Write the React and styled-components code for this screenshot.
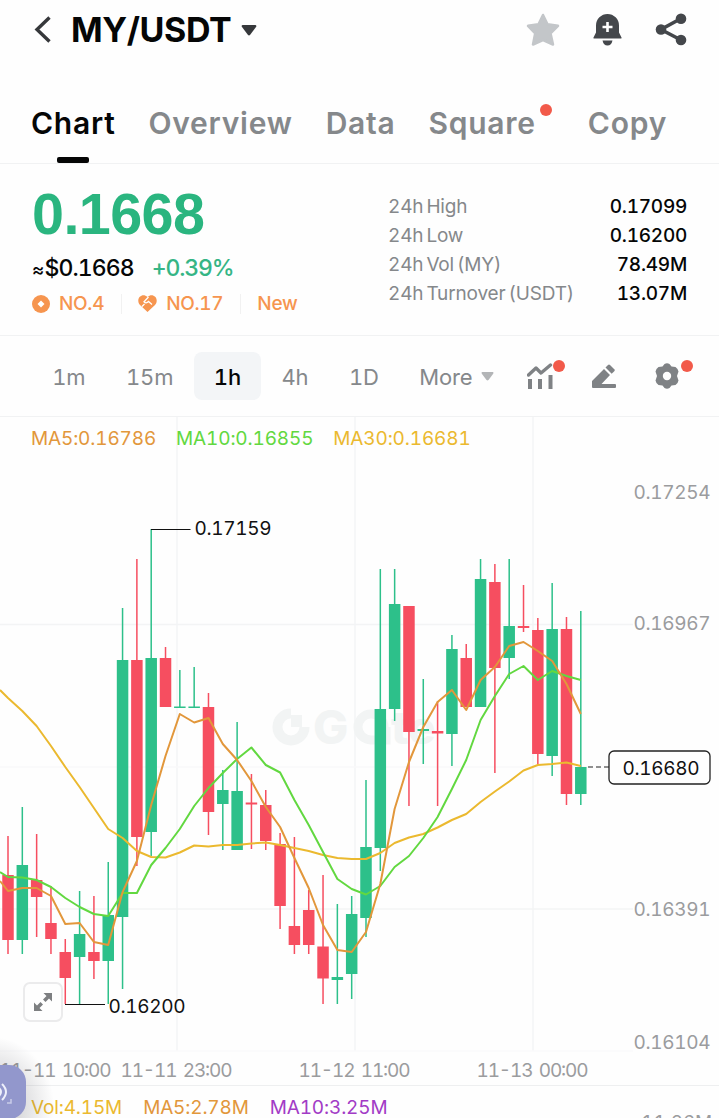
import React, { useState } from "react";
import styled, { createGlobalStyle } from "styled-components";

const GlobalStyle = createGlobalStyle`
    * {
        box-sizing: border-box;
    }
    body {
        margin: 0;
        background: #fefefe;
        overflow: hidden;
    }
`;

const UP = "#2dc08a";
const DOWN = "#f64e60";
const MA5 = "#e2973b";
const MA10 = "#62d840";
const MA30 = "#ebb92f";

const Page = styled.div`
    width: 719px;
    height: 1118px;
    overflow: hidden;
    position: relative;
    background: #fefefe;
    color: #050606;
    font-family: Inter, "Liberation Sans", sans-serif;
    font-feature-settings: "tnum";
    white-space: nowrap;
`;

const Header = styled.header`
    height: 60px;
    display: flex;
    align-items: center;
    justify-content: space-between;
    padding: 0 32px 0 34px;
`;

const Pair = styled.div`
    display: flex;
    align-items: center;
`;

const PairName = styled.h1`
    margin: 0 10px 0 19px;
    font-size: 34px;
    line-height: 60px;
    font-weight: 700;
    letter-spacing: -0.4px;
`;

const Actions = styled.div`
    display: flex;
    align-items: center;
    gap: 32.5px;
    height: 58px;
`;

const Tabs = styled.nav`
    height: 104px;
    display: flex;
    align-items: flex-start;
    gap: 33px;
    padding: 43px 32px 0 31px;
    border-bottom: 1px solid #f1f2f3;
`;

const Tab = styled.div`
    display: flex;
    flex-direction: column;
    align-items: center;
    position: relative;
    margin-right: ${(p) => (p.$dot ? 19 : 0)}px;
    font-size: 30px;
    line-height: 40px;
    font-weight: 600;
    letter-spacing: 0.75px;
    color: ${(p) => (p.$active ? "#050606" : "#85888b")};
`;

const TabBar = styled.span`
    width: 32px;
    height: 6px;
    margin-top: 14px;
    border-radius: 2px;
    background: #050606;
`;

const Dot = styled.span`
    position: absolute;
    width: 12px;
    height: 12px;
    border-radius: 50%;
    background: #f25a4a;
    top: ${(p) => p.$top}px;
    right: ${(p) => p.$right}px;
`;

const Quote = styled.section`
    height: 172px;
    display: flex;
    justify-content: space-between;
    padding: 20px 32px 0 32px;
    border-bottom: 1px solid #f1f2f3;
`;

const Price = styled.div`
    font-family: "Liberation Sans", sans-serif;
    font-size: 57.5px;
    line-height: 61px;
    font-weight: 700;
    letter-spacing: -0.6px;
    color: #2ab57f;
`;

const SubPrice = styled.div`
    display: flex;
    gap: 18px;
    height: 46px;
    font-size: 23px;
    line-height: 46px;
    font-weight: 500;
    letter-spacing: -0.9px;
`;

const Approx = styled.span`
    font-size: 19px;
    line-height: 1;
    margin-right: 1px;
`;

const Change = styled.span`
    color: #35b585;
    letter-spacing: -1.15px;
`;

const Tags = styled.div`
    display: flex;
    align-items: center;
    height: 25px;
    font-size: 19px;
    font-weight: 500;
    letter-spacing: -0.3px;
    color: #f6954f;
`;

const Tag = styled.span`
    display: flex;
    align-items: center;
    gap: 9px;
    line-height: 20px;

    & + & {
        margin-left: 17px;
        padding-left: 16px;
        border-left: 1px solid #f1f1f1;
    }
`;

const Stats = styled.dl`
    width: 299px;
    margin: 8px 0 0;
`;

const Stat = styled.div`
    display: flex;
    justify-content: space-between;
    font-size: 19px;
    line-height: 29px;
`;

const StatName = styled.dt`
    color: #85888b;
    letter-spacing: -0.15px;
    word-spacing: -2px;
`;

const StatValue = styled.dd`
    margin: 0;
    font-weight: 500;
    letter-spacing: -0.25px;
`;

const Toolbar = styled.div`
    height: 81px;
    display: flex;
    align-items: center;
    padding: 0 32px 0 32px;
    border-bottom: 1px solid #f1f2f3;
`;

const Frame = styled.div`
    height: 48px;
    display: flex;
    align-items: center;
    gap: 9px;
    padding: 1px 20.3px 0;
    border-radius: 8px;
    font-size: 22px;
    font-weight: ${(p) => (p.$active ? 500 : 400)};
    letter-spacing: -0.2px;
    color: ${(p) => (p.$active ? "#050606" : "#85888b")};
    background: ${(p) => (p.$active ? "#f3f5f7" : "transparent")};
`;

const Tools = styled.div`
    display: flex;
    gap: 37.5px;
    margin-left: auto;
    margin-right: 7px;
`;

const Tool = styled.span`
    display: flex;
    position: relative;
`;

const ChartArea = styled.section`
    position: relative;
    height: 669px;
    border-bottom: 1px solid #eeeff0;

    svg {
        display: block;
    }
`;

const Legend = styled.div`
    display: flex;
    gap: 20px;
    padding-left: 31px;
    font-size: 19px;
    line-height: 24px;
    letter-spacing: -0.15px;
`;

const TopLegend = styled(Legend)`
    position: absolute;
    top: 10px;
    left: 0;
`;

const VolLegend = styled(Legend)`
    gap: 21px;
    padding-top: 10px;
    height: 32px;
    overflow: hidden;
`;

const LegendItem = styled.span`
    color: ${(p) => p.$color};
`;

const VolAxis = styled.span`
    margin-left: auto;
    margin-right: 7px;
    padding-top: 15px;
    color: #9b9c9e;
`;

const Expand = styled.button`
    position: absolute;
    left: 23px;
    top: 565px;
    width: 40px;
    height: 40px;
    display: grid;
    place-items: center;
    padding: 0;
    border: 2px solid #ebebec;
    border-radius: 7px;
    background: #fefefe;
`;

const Halo = styled.div`
    position: absolute;
    left: -70px;
    bottom: -55px;
    width: 124px;
    height: 136px;
    border-radius: 50%;
    background: radial-gradient(closest-side, rgba(60, 60, 70, 0.2) 40%, rgba(60, 60, 70, 0) 100%);
`;

const Assist = styled.div`
    position: absolute;
    left: -28px;
    bottom: -1px;
    width: 54px;
    height: 54px;
    display: flex;
    align-items: center;
    justify-content: flex-end;
    padding-right: 10px;
    border-radius: 17px;
    background: #9297cc;
`;

const X0 = 8;
const STEP = 14.32;
const TOP = 417;

// wick top, body top, body bottom, wick bottom
const candles = [
    ["d", 836, 875, 940, 954],
    ["u", 807, 865, 940, 954],
    ["d", 834, 880, 897, 937],
    ["d", 886, 923, 939, 954],
    ["d", 939, 952, 978, 1004],
    ["u", 891, 934, 957, 1004],
    ["d", 896, 952, 961, 979],
    ["u", 862, 915, 961, 1004],
    ["u", 608, 660, 917, 989],
    ["d", 559, 660, 837, 866],
    ["u", 529, 658, 832, 856],
    ["d", 647, 658, 707, 707],
    ["u", 670, 706.5, 708, 708],
    ["u", 667, 706.5, 708, 708],
    ["d", 693, 707, 812, 835],
    ["u", 770, 790, 804, 850],
    ["u", 722, 791, 850, 850],
    ["d", 774, 802.5, 804.5, 849],
    ["d", 790, 805, 841, 850],
    ["d", 833, 844, 906, 929],
    ["d", 837, 926, 945, 954],
    ["d", 890, 910, 945, 954],
    ["d", 875, 946.5, 978.5, 1004],
    ["u", 904, 977, 980, 1004],
    ["u", 896, 914, 974, 999],
    ["u", 780, 847, 918, 937],
    ["u", 569, 709, 848, 871],
    ["u", 569, 604, 709, 721],
    ["d", 606, 606, 732, 806],
    ["u", 679, 729, 731, 764],
    ["d", 701, 731, 733.5, 806],
    ["u", 635, 649, 734, 766],
    ["d", 644, 658, 707, 707],
    ["u", 559, 579, 707, 707],
    ["d", 564, 582, 668, 773],
    ["u", 559, 626, 658, 679],
    ["d", 585, 626, 628, 632],
    ["d", 618, 630, 754, 764],
    ["u", 583, 629, 756, 776],
    ["d", 617, 629, 794, 805],
    ["u", 611, 767, 794, 805],
];

const ma5 = [891, 888, 888, 896, 924, 923, 942, 945, 892, 861, 805, 756, 714, 722.5, 718, 744, 760, 781, 807, 827, 858, 888, 925, 950, 952, 932, 884, 809, 762, 727, 702, 690, 710, 680, 667, 646, 642, 651, 661, 684, 714];
const ma10 = [877, 877.5, 880, 887, 898, 907, 914, 916, 893, 893, 865, 848, 829, 806, 788, 773, 759, 747.5, 765, 772.5, 800, 825, 852, 879, 889, 894.5, 886, 867, 856, 838, 817, 789, 760, 720, 696, 674, 666, 680, 671, 676, 680];
const ma30 = [698, 711, 726, 746, 767, 787, 808, 829, 838, 851, 857, 857.5, 852.5, 845.5, 846.5, 845, 845, 843.5, 842.5, 845, 848, 851, 855, 858, 859, 859, 853, 843, 837.5, 834, 827.5, 820, 814, 802, 791.5, 781.5, 770.5, 765, 764, 762.5, 766];

const line = (start, values) =>
    `0,${start} ` + values.map((y, i) => `${(X0 + i * STEP).toFixed(1)},${y}`).join(" ");

const yTicks = [
    ["0.17254", 492],
    ["0.16967", 623],
    ["0.16391", 909],
    ["0.16104", 1042],
];

const xTicks = [
    ["11-11 10:00", -0.5],
    ["11-11 23:00", 120.5],
    ["11-12 11:00", 298.5],
    ["11-13 00:00", 476.5],
];

function ChartText({ x, y, w, fill = "#9b9c9e", children }) {
    return (
        <text x={x} y={y + 7} fontSize="19" fill={fill} textLength={w} lengthAdjust="spacing" wordSpacing="2.5">
            {children}
        </text>
    );
}

function CandleChart() {
    return (
        <svg width="719" height="668" viewBox={`0 ${TOP} 719 668`}>
            <g stroke="#f3f4f5" strokeWidth="1.4">
                {[177, 355, 533].map((x) => (
                    <line key={x} x1={x} x2={x} y1={TOP} y2="1051" />
                ))}
                <line x1="0" x2="633" y1="624.5" y2="624.5" />
                <line x1="0" x2="588" y1="767" y2="767" stroke="#f9f9fa" />
                <line x1="0" x2="633" y1="909" y2="909" />
                <line x1="0" x2="633" y1="1051" y2="1051" stroke="#fafafb" />
            </g>
            <g fill="#f2f4f4" fontWeight="800">
                <path d="M291 713.5 A13.5 13.5 0 1 0 304.5 727" fill="none" stroke="#f2f4f4" strokeWidth="10" />
                <path d="M291 715H302V727H291Z" />
                <text x="313" y="744" fontSize="47">G</text>
                <path d="M384 727A13 13 0 1 0 371 740H386V727" fill="none" stroke="#f2f4f4" strokeWidth="9" />
                <text x="391" y="744" fontSize="46">te</text>
            </g>
            {candles.map(([dir, high, top, bottom, low], i) => {
                const x = X0 + i * STEP;
                return (
                    <g key={i} fill={dir === "u" ? UP : DOWN}>
                        <rect x={x - 0.75} y={high} width="1.5" height={low - high} />
                        <rect x={x - 5.75} y={top} width="11.5" height={bottom - top} />
                    </g>
                );
            })}
            <g fill="none" strokeWidth="2" strokeLinejoin="round">
                <polyline points={line(690, ma30)} stroke={MA30} />
                <polyline points={line(872, ma10)} stroke={MA10} />
                <polyline points={line(881, ma5)} stroke={MA5} />
            </g>
            <path d="M151 529.5H190.500M65 1004.5H105" stroke="#111" strokeWidth="1.2" fill="none" />
            <ChartText x={194.5} y={528} w={77} fill="#111">0.17159</ChartText>
            <ChartText x={108.5} y={1006} w={77} fill="#111">0.16200</ChartText>
            <path d="M588 767H609" stroke="#222" strokeWidth="1.2" strokeDasharray="5 3" />
            <rect x="609" y="751" width="101" height="33" rx="5" fill="#fefefe" stroke="#222" strokeWidth="1.3" />
            <ChartText x={622.5} y={768} w={77} fill="#111">0.16680</ChartText>
            {yTicks.map(([label, y]) => (
                <ChartText key={label} x={633.5} y={y} w={77}>{label}</ChartText>
            ))}
            {xTicks.map(([label, x]) => (
                <ChartText key={label} x={x} y={1070} w={112}>{label}</ChartText>
            ))}
        </svg>
    );
}

const Caret = ({ w, h, color }) => (
    <svg width={w} height={h} viewBox="0 0 16 11">
        <path d="M1.500 0H14.500Q16 .5 15 2L9.200 9.800Q8 11 6.800 9.800L1 2Q0 .5 1.500 0Z" fill={color} />
    </svg>
);

const BackIcon = () => (
    <svg width="18" height="28" viewBox="0 0 18 28">
        <path d="M15.500 1.500L3 13.500L15.500 25.500" fill="none" stroke="#36383b" strokeWidth="3.400" />
    </svg>
);

const StarIcon = () => (
    <svg width="34" height="34" viewBox="0 0 34 34">
        <path
            d="M17 2L21.500 11.300L32 12.800L24.500 20.300L27 31.500L17 27L7 31.500L9.200 20.300L2 12.800L12.500 11.300Z"
            fill="#c3c6c9"
            stroke="#c3c6c9"
            strokeWidth="2.500"
            strokeLinejoin="round"
        />
    </svg>
);

const BellIcon = () => (
    <svg width="30" height="32" viewBox="0 0 30 32">
        <path d="M3 11.500A11.500 11.500 0 0 1 26 11.500V18.500L28.500 23.500Q29 24.500 28 24.500H1Q0 24.500 .5 23.500L3 18.500Z" fill="#44474b" />
        <path d="M9.500 26.500H19.500Q18.500 31.500 14.500 31.500T9.500 26.500Z" fill="#44474b" />
        <path d="M14.500 8V18M9.500 13H19.500" stroke="#fff" strokeWidth="2.600" />
    </svg>
);

const ShareIcon = () => (
    <svg width="32" height="34" viewBox="0 0 32 34">
        <path d="M26 5.500L6 16.500L26 27" fill="none" stroke="#44474b" strokeWidth="3.600" />
        <g fill="#44474b">
            <circle cx="26" cy="5.800" r="5.300" />
            <circle cx="6" cy="16.500" r="5.300" />
            <circle cx="26" cy="27" r="5.300" />
        </g>
    </svg>
);

const CoinIcon = () => (
    <svg width="18" height="18" viewBox="0 0 18 18">
        <circle cx="9" cy="9" r="9" fill="#f6954f" />
        <path d="M9 5.500L12.500 9L9 12.500L5.500 9Z" fill="#fff" />
    </svg>
);

const HeartIcon = () => (
    <svg width="19" height="17" viewBox="0 0 19 17">
        <path d="M9.500 17L2 10C-3 4 4-3 9.500 2C15-3 22 4 17 10Z" fill="#f6954f" />
        <path d="M10.500 2L6 6.800Q8 9 10.500 6.500L14 9.500M4 11.500L6.500 9" fill="none" stroke="#fff" strokeWidth="1.300" />
    </svg>
);

const TrendIcon = () => (
    <svg width="26" height="26" viewBox="0 0 26 26">
        <g fill="none" stroke="#7f8285" strokeLinejoin="round">
            <path d="M1.500 12L9 5L14 10L23.500 2" strokeWidth="3.400" strokeLinecap="round" />
            <path d="M3 16V26M13 16V26M23.500 12V26" strokeWidth="4" />
        </g>
    </svg>
);

const PencilIcon = () => (
    <svg width="26" height="26" viewBox="0 0 26 26">
        <g fill="#7f8285">
            <path d="M1 18L13 6L19 12L10.500 21H24Q25 21 25 22V24Q25 25 24 25H2Q1 25 1 24Z" />
            <path d="M14.500 4.500L17 2Q18 1 19 2L23.500 6.500Q24 7.500 23.500 8L20.700 10.700Z" />
        </g>
    </svg>
);

const GearIcon = () => (
    <svg width="26" height="26" viewBox="0 0 26 26">
        <path
            d="M10.500 1Q13-.5 15.500 1L17.500 3.500L21.500 4Q24 5.500 24.500 8.500L23 13L24.500 17.500Q24 20.500 21.500 22L17.500 22.500L15.500 25Q13 26.500 10.500 25L8.500 22.500L4.500 22Q2 20.500 1.500 17.500L3 13L1.500 8.500Q2 5.500 4.500 4L8.500 3.500Z"
            fill="#7f8285"
        />
        <circle cx="13" cy="13" r="4.200" fill="#fefefe" />
    </svg>
);

const ExpandIcon = () => (
    <svg width="20" height="20" viewBox="0 0 20 20">
        <path d="M10.500 1H19V9.500L16 6.500L12.500 10L10 7.500L13.500 4ZM9.500 19H1V10.500L4 13.500L7.500 10L10 12.500L6.500 16Z" fill="#7d7f81" />
    </svg>
);

const VoiceIcon = () => (
    <svg width="24" height="26" viewBox="0 0 24 26">
        <g fill="none" stroke="#eef0fb" strokeWidth="2">
            <path d="M7 9Q11 13 7 17M10 5Q18 13 10 21" />
            <path d="M19 20V24H15" strokeWidth="1.500" opacity=".6" />
        </g>
    </svg>
);

const tabs = ["Chart", "Overview", "Data", "Square", "Copy"];
const frames = ["1m", "15m", "1h", "4h", "1D", "More"];
const stats = [
    ["24h High", "0.17099"],
    ["24h Low", "0.16200"],
    ["24h Vol (MY)", "78.49M"],
    ["24h Turnover (USDT)", "13.07M"],
];

export default function App() {
    const [tab, setTab] = useState("Chart");
    const [frame, setFrame] = useState("1h");

    return (
        <Page>
            <GlobalStyle />
            <Header>
                <Pair>
                    <BackIcon />
                    <PairName>MY/USDT</PairName>
                    <Caret w={16} h={11} color="#36383b" />
                </Pair>
                <Actions>
                    <StarIcon />
                    <BellIcon />
                    <ShareIcon />
                </Actions>
            </Header>
            <Tabs>
                {tabs.map((name) => (
                    <Tab key={name} $active={name === tab} $dot={name === "Square"} onClick={() => setTab(name)}>
                        {name}
                        {name === tab && <TabBar />}
                        {name === "Square" && <Dot $top={1} $right={-16} />}
                    </Tab>
                ))}
            </Tabs>
            <Quote>
                <div>
                    <Price>0.1668</Price>
                    <SubPrice>
                        <span><Approx>≈</Approx>$0.1668</span>
                        <Change>+0.39%</Change>
                    </SubPrice>
                    <Tags>
                        <Tag><CoinIcon />NO.4</Tag>
                        <Tag><HeartIcon />NO.17</Tag>
                        <Tag>New</Tag>
                    </Tags>
                </div>
                <Stats>
                    {stats.map(([name, value]) => (
                        <Stat key={name}>
                            <StatName>{name}</StatName>
                            <StatValue>{value}</StatValue>
                        </Stat>
                    ))}
                </Stats>
            </Quote>
            <Toolbar>
                {frames.map((name) => (
                    <Frame key={name} $active={name === frame} onClick={() => setFrame(name)}>
                        {name}
                        {name === "More" && <Caret w={13} h={9} color="#b3b5b7" />}
                    </Frame>
                ))}
                <Tools>
                    <Tool><TrendIcon /><Dot $top={-3} $right={-12} /></Tool>
                    <Tool><PencilIcon /></Tool>
                    <Tool><GearIcon /><Dot $top={-3} $right={-13} /></Tool>
                </Tools>
            </Toolbar>
            <ChartArea>
                <CandleChart />
                <TopLegend>
                    <LegendItem $color={MA5}>MA5:0.16786</LegendItem>
                    <LegendItem $color={MA10}>MA10:0.16855</LegendItem>
                    <LegendItem $color={MA30}>MA30:0.16681</LegendItem>
                </TopLegend>
                <Expand><ExpandIcon /></Expand>
            </ChartArea>
            <VolLegend>
                <LegendItem $color={MA30}>Vol:4.15M</LegendItem>
                <LegendItem $color={MA5}>MA5:2.78M</LegendItem>
                <LegendItem $color="#a23bc6">MA10:3.25M</LegendItem>
                <VolAxis>11.26M</VolAxis>
            </VolLegend>
            <Halo />
            <Assist><VoiceIcon /></Assist>
        </Page>
    );
}
